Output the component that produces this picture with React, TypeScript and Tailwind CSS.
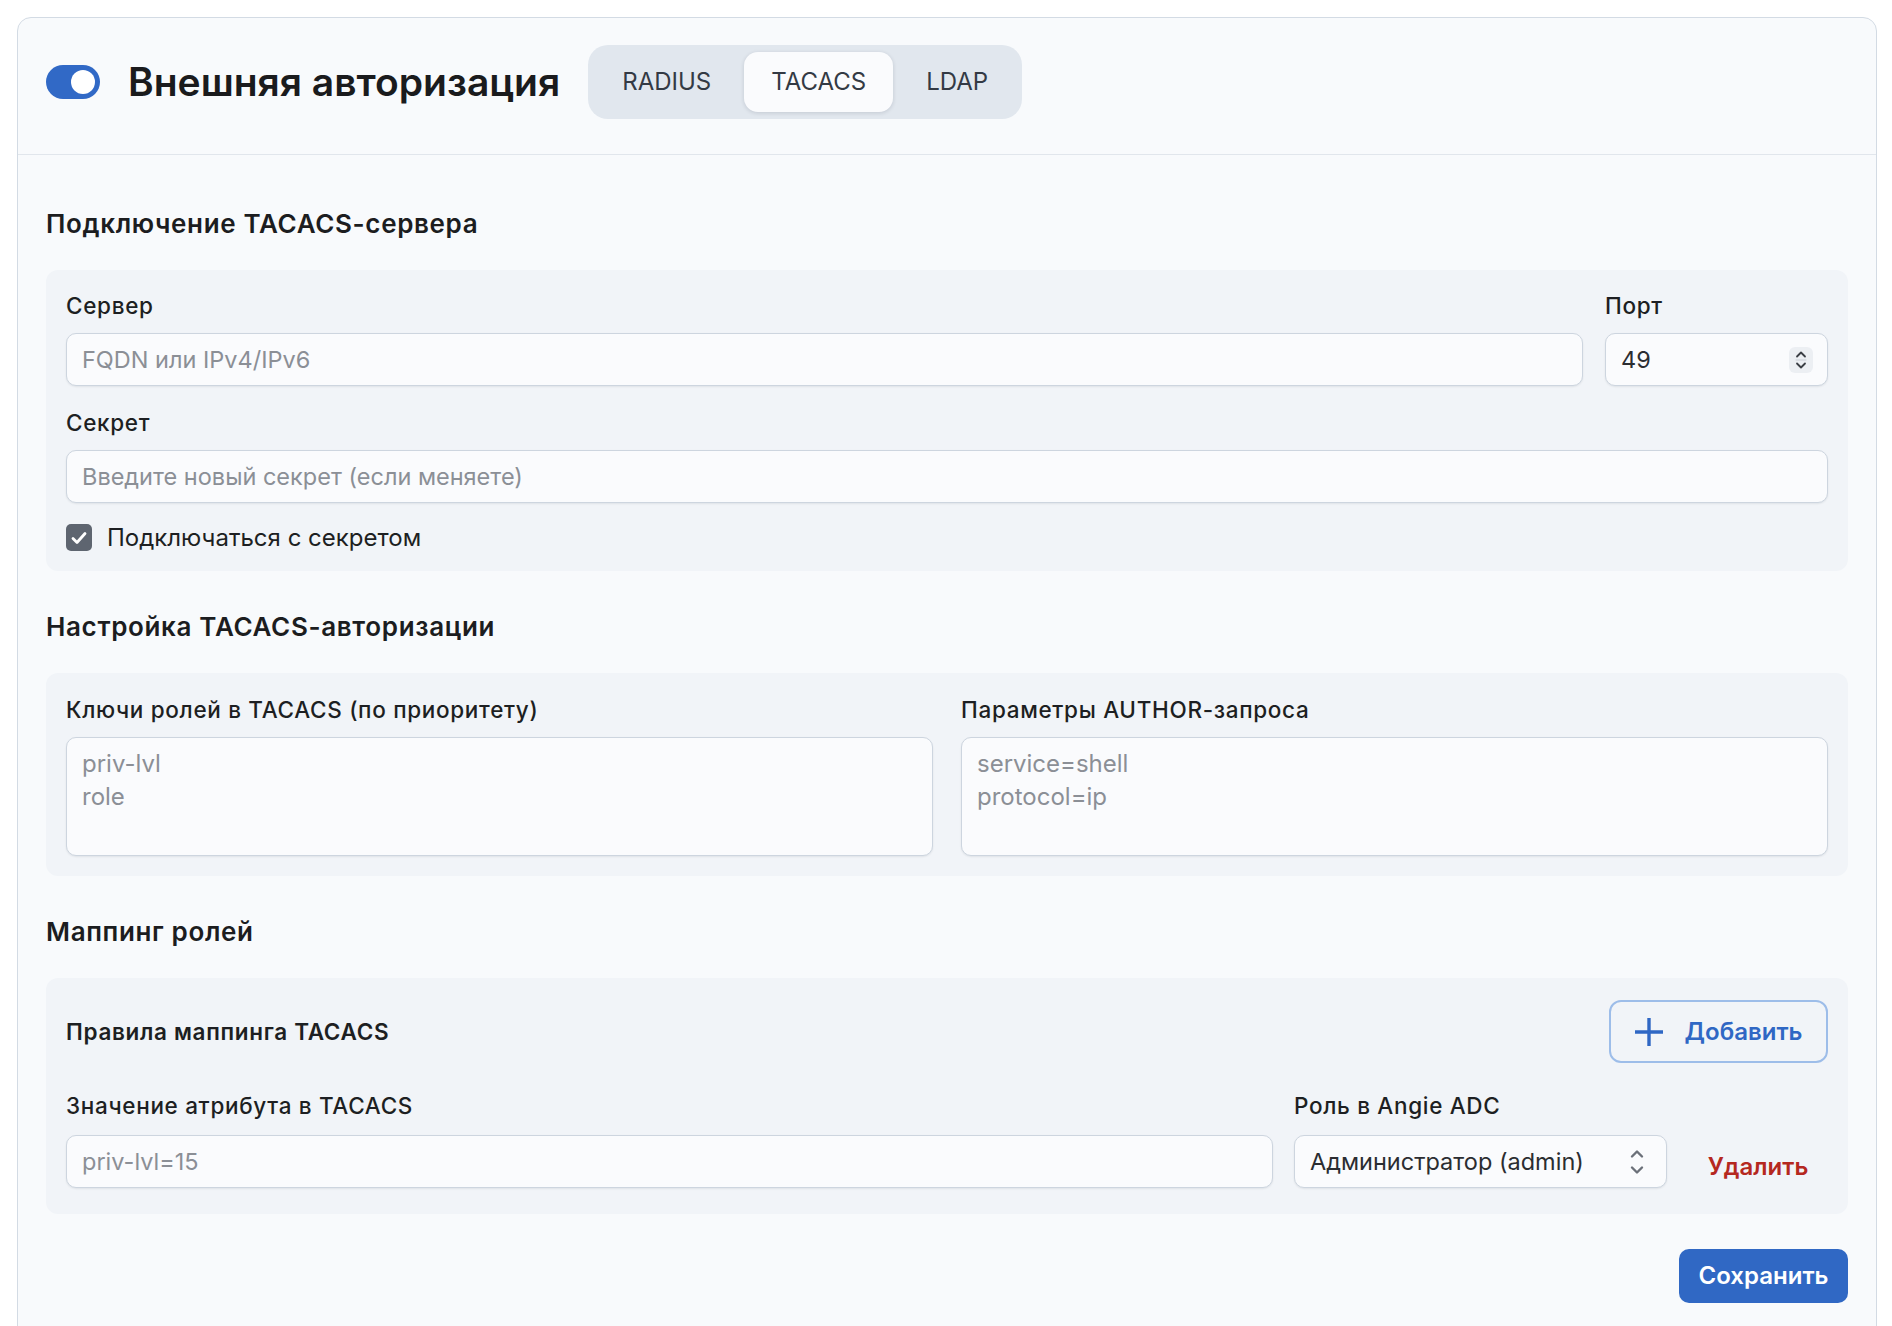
import React from "react";

function Label({ children, className = "" }: { children: React.ReactNode; className?: string }) {
  return (
    <div className={"text-[22.5px] leading-[30px] font-medium tracking-[0.03em] text-[#1d1f22] " + className}>{children}</div>
  );
}

const inputCls =
  "block w-full h-[53px] rounded-[10px] border border-[#cdd5df] bg-[#fafbfd] px-[15px] text-[23.5px] text-[#2b2d31] placeholder:text-[#8b8f96] shadow-[0_1px_2px_rgba(15,23,42,0.08)] outline-none";

const areaCls =
  "mt-[12px] block h-[119px] w-full resize-none rounded-[10px] border border-[#cdd5df] bg-[#fafbfd] px-[15px] pt-[9px] text-[24px] leading-[33px] text-[#2b2d31] placeholder:text-[#8b8f96] shadow-[0_1px_2px_rgba(15,23,42,0.08)] outline-none";

const headingCls = "text-[26px] leading-[32px] font-semibold tracking-[0.025em] text-[#1c1d1f]";

function Spinner() {
  return (
    <div className="pointer-events-none absolute right-[15px] top-1/2 -translate-y-1/2 flex h-[26px] w-[24px] items-center justify-center rounded-[6px] bg-[#eceff3]">
      <svg width="14" height="22" viewBox="0 0 14 22" fill="none" stroke="#3b3f45" strokeWidth="1.8" strokeLinecap="round" strokeLinejoin="round">
        <path d="M3 7.5 L7 3.5 L11 7.5" />
        <path d="M3 14.5 L7 18.5 L11 14.5" />
        <path d="M2 11 L12 11" stroke="#c9ced6" strokeWidth="1" />
      </svg>
    </div>
  );
}

function SelectChevrons() {
  return (
    <svg className="pointer-events-none absolute right-[23px] top-1/2 -translate-y-1/2" width="14" height="27" viewBox="0 0 14 27" fill="none" stroke="#6b7079" strokeWidth="2.4" strokeLinecap="round" strokeLinejoin="round">
      <path d="M2 8 L7 3 L12 8" />
      <path d="M2 19 L7 24 L12 19" />
    </svg>
  );
}

export default function App() {
  return (
    <div className="min-h-screen bg-white pl-[17px] pr-[15px] pt-[17px] font-[Inter,'Noto_Sans',sans-serif]">
      <div className="rounded-t-[14px] border border-[#d3dbe4] bg-[#f8fafc] pb-[40px]">
        {/* Header */}
        <div className="flex items-center gap-[28px] border-b border-[#e1e6ec] px-[28px] pt-[27px] pb-[35px]">
          <div className="flex h-[34px] w-[54px] items-center justify-end rounded-full bg-[#3169c6] px-[5px]">
            <div className="h-[24px] w-[24px] rounded-full bg-white" />
          </div>
          <h1 className="text-[39px] leading-[44px] font-semibold text-[#1a1b1d]">
            Внешняя авторизация
          </h1>
          <div className="flex h-[74px] items-center gap-[6px] rounded-[20px] bg-[#e1e7ee] p-[7px]">
            <button className="h-[60px] rounded-[14px] px-[27px] text-[24px] text-[#333a44]">RADIUS</button>
            <button className="h-[60px] rounded-[14px] bg-[#fafbfd] px-[27px] text-[24px] text-[#333a44] shadow-[0_1px_4px_rgba(15,23,42,0.14)]">
              TACACS
            </button>
            <button className="h-[60px] rounded-[14px] px-[27px] text-[24px] text-[#333a44]">LDAP</button>
          </div>
        </div>

        {/* Content */}
        <div className="px-[28px] pt-[53px]">
          <h2 className={headingCls}>Подключение TACACS-сервера</h2>
          <div className="mt-[30px] rounded-[12px] bg-[#f1f4f8] px-[20px] pt-[21px] pb-[20px]">
            <div className="grid grid-cols-[1fr_223px] gap-x-[22px]">
              <div>
                <Label>Сервер</Label>
                <input className={inputCls + " mt-[12px]"} placeholder="FQDN или IPv4/IPv6" />
              </div>
              <div>
                <Label>Порт</Label>
                <div className="relative mt-[12px]">
                  <input className={inputCls} defaultValue="49" />
                  <Spinner />
                </div>
              </div>
            </div>
            <Label className="mt-[22px]">Секрет</Label>
            <input className={inputCls + " mt-[12px]"} placeholder="Введите новый секрет (если меняете)" />
            <label className="mt-[21px] flex h-[27px] items-center gap-[15px]">
              <span className="flex h-[27px] w-[26px] items-center justify-center rounded-[5px] bg-[#5e6570]">
                <svg width="18" height="18" viewBox="0 0 18 18" fill="none" stroke="white" strokeWidth="2.8" strokeLinecap="round" strokeLinejoin="round">
                  <path d="M3 9.5 L7 13.5 L15 4.5" />
                </svg>
              </span>
              <span className="text-[24px] leading-[30px] text-[#1d1f22]">Подключаться с секретом</span>
            </label>
          </div>

          <h2 className={"mt-[40px] " + headingCls}>Настройка TACACS-авторизации</h2>
          <div className="mt-[30px] grid grid-cols-2 gap-x-[28px] rounded-[12px] bg-[#f1f4f8] px-[20px] pt-[22px] pb-[20px]">
            <div>
              <Label>Ключи ролей в TACACS (по приоритету)</Label>
              <textarea className={areaCls} placeholder={"priv-lvl\nrole"} />
            </div>
            <div>
              <Label>Параметры AUTHOR-запроса</Label>
              <textarea className={areaCls} placeholder={"service=shell\nprotocol=ip"} />
            </div>
          </div>

          <h2 className={"mt-[40px] " + headingCls}>Маппинг ролей</h2>
          <div className="mt-[30px] rounded-[12px] bg-[#f1f4f8] px-[20px] pt-[22px] pb-[26px]">
            <div className="flex h-[63px] items-center justify-between">
              <div className="text-[22.5px] font-semibold tracking-[0.03em] text-[#1d1f22]">Правила маппинга TACACS</div>
              <button className="flex h-[63px] w-[219px] items-center justify-center gap-[22px] rounded-[12px] border-2 border-[#9dbde9] text-[24px] font-semibold text-[#2f67c4]">
                <svg width="28" height="28" viewBox="0 0 28 28" fill="none" stroke="#2f67c4" strokeWidth="3.4">
                  <path d="M14 0 V28 M0 14 H28" />
                </svg>
                Добавить
              </button>
            </div>
            <div className="mt-[28px] grid grid-cols-[1fr_373px_140px] gap-x-[21px]">
              <div>
                <Label>Значение атрибута в TACACS</Label>
                <input className={inputCls + " mt-[14px] h-[52px]"} placeholder="priv-lvl=15" />
              </div>
              <div>
                <Label>Роль в Angie ADC</Label>
                <div className="relative mt-[14px]">
                  <select className={inputCls + " h-[52px] appearance-none"} defaultValue="admin">
                    <option value="admin">Администратор (admin)</option>
                  </select>
                  <SelectChevrons />
                </div>
              </div>
              <button className="flex h-[42px] items-center justify-center self-end text-[24px] font-semibold text-[#b5281f]">
                Удалить
              </button>
            </div>
          </div>

          <div className="mt-[35px] flex justify-end">
            <button className="h-[54px] w-[169px] rounded-[10px] bg-[#3068c4] text-[24px] font-semibold text-white">
              Сохранить
            </button>
          </div>
        </div>
      </div>
    </div>
  );
}
